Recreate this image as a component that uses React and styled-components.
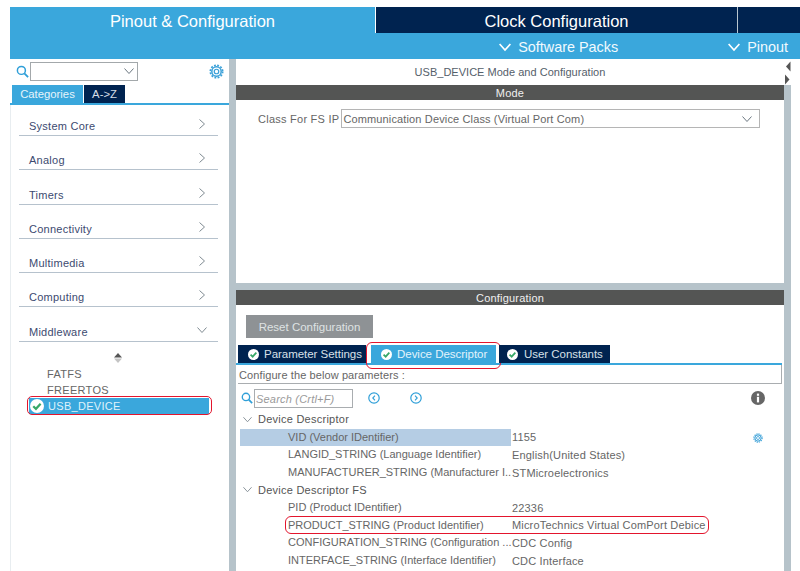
import React from "react";
import styled, { createGlobalStyle } from "styled-components";

const Global = createGlobalStyle`
  html, body { margin: 0; padding: 0; background: #fff; overflow: hidden; }
  body { font-family: "Liberation Sans", Arial, sans-serif; }
  * { box-sizing: border-box; }
`;

const Page = styled.div`
  width: 800px;
  height: 571px;
  overflow: hidden;
  padding: 7px 0 0 10px;
  background: #fff;
  display: flex;
  flex-direction: column;
`;
const TopTabs = styled.div`
  display: flex;
  height: 26px;
  flex: none;
`;
const TopTab = styled.div`
  width: ${(p) => p.$w}px;
  flex: ${(p) => (p.$grow ? 1 : "none")};
  background: ${(p) => (p.$active ? "#3aa7dc" : "#002350")};
  border-left: ${(p) => (p.$sep ? "1px solid #b9c6cf" : "none")};
  color: #fff;
  font-size: 16.5px;
  text-align: center;
  line-height: 29px;
`;
const TabDivider = styled.div`
  width: 1px;
  flex: none;
  background: #fff;
`;
const SubBar = styled.div`
  height: 26px;
  flex: none;
  background: #3aa7dc;
  color: #f2fafe;
  font-size: 14.4px;
  display: flex;
  align-items: center;
  justify-content: flex-end;
  padding: 2px 12px 0 0;
`;
const SubItem = styled.div`
  display: flex;
  align-items: center;
  gap: 7px;
  margin-left: ${(p) => p.$ml || 0}px;
`;
const Body = styled.div`
  flex: 1;
  min-height: 0;
  display: flex;
`;
const Sidebar = styled.div`
  width: 219px;
  flex: none;
  background: #fff;
  display: flex;
  flex-direction: column;
`;
const SearchRow = styled.div`
  height: 26px;
  flex: none;
  display: flex;
  align-items: center;
  padding: 0 5px 2px 6px;
  gap: 1px;
`;
const Combo = styled.div`
  width: 108px;
  height: 19px;
  border: 1px solid #a3a8ab;
  display: flex;
  align-items: center;
  justify-content: flex-end;
  padding-right: 3px;
`;
const GearSlot = styled.div`
  margin-left: auto;
  display: flex;
`;
const SideTabs = styled.div`
  display: flex;
  height: 20px;
  flex: none;
  border-bottom: 2px solid #3aa7dc;
  padding-left: 2px;
`;
const SideTab = styled.div`
  width: ${(p) => p.$w}px;
  height: 18px;
  background: ${(p) => (p.$active ? "#3aa7dc" : "#002350")};
  color: ${(p) => (p.$active ? "#e6f4fb" : "#d5dde6")};
  font-size: 11.3px;
  text-align: center;
  line-height: 18px;
  margin-right: 1px;
`;
const CatList = styled.div`
  flex: 1;
  padding: 0 11px 0 8px;
  border-left: 1px solid #e8edf0;
`;
const Cat = styled.div`
  height: 34.3px;
  border-bottom: 1px solid #b6c2cd;
  display: flex;
  align-items: flex-end;
  justify-content: space-between;
  color: #3c4a70;
  font-size: 11px;
  letter-spacing: 0.25px;
  padding: 0 11px 3px 10px;
  &:first-child { height: 31px; }
`;
const Chevron = styled.span`
  display: flex;
  margin-bottom: 3px;
`;
const SubList = styled.div`
  padding: 11px 9px 0 10px;
  display: flex;
  flex-direction: column;
`;
const SortIcon = styled.div`
  display: flex;
  justify-content: center;
  margin: 0 0 3px 0;
  padding-right: 3px;
`;
const SubEntry = styled.div`
  height: 16px;
  line-height: 16px;
  font-size: 11px;
  letter-spacing: 0.3px;
  color: #666;
  padding-left: 18px;
`;
const Selected = styled.div`
  position: relative;
  height: 16px;
  background: #3aa7dc;
  color: #dff2fb;
  font-size: 11px;
  letter-spacing: 0.3px;
  line-height: 17px;
  padding-left: 19px;
`;
const SelCheck = styled.span`
  position: absolute;
  left: 1px;
  top: 1px;
  display: flex;
`;
const RedBox = styled.div`
  position: absolute;
  left: ${(p) => p.$l}px;
  right: ${(p) => p.$r}px;
  top: ${(p) => p.$t}px;
  bottom: ${(p) => p.$b}px;
  border: 1.5px solid #e3152d;
  border-radius: ${(p) => p.$rad || 5}px;
  pointer-events: none;
`;
const Gutter = styled.div`
  width: 7px;
  flex: none;
  background: #b6c3ca;
`;
const ArrowGutter = styled(Gutter)`
  display: flex;
  flex-direction: column;
`;
const ArrowCap = styled.div`
  height: 26px;
  flex: none;
  background: #fff;
  display: flex;
`;
const Main = styled.div`
  width: 548px;
  flex: none;
  display: flex;
  flex-direction: column;
  background: #b6c3ca;
`;
const ModePanel = styled.div`
  height: 224px;
  flex: none;
  background: #fff;
  margin-bottom: 7px;
`;
const PanelTitle = styled.div`
  height: 26px;
  text-align: center;
  font-size: 11px;
  letter-spacing: 0.02px;
  line-height: 27px;
  color: #55606a;
`;
const SectionHead = styled.div`
  height: 15px;
  background: #545554;
  color: #f0f0f0;
  font-size: 11px;
  text-align: center;
  line-height: 16px;
  letter-spacing: 0.2px;
`;
const ClassRow = styled.div`
  display: flex;
  align-items: center;
  margin-top: 9px;
  padding-left: 22px;
  color: #666;
  font-size: 11px;
  letter-spacing: 0.25px;
`;
const ClassSelect = styled.div`
  width: 419px;
  height: 19px;
  margin-left: 2px;
  border: 1px solid #b5b5b5;
  display: flex;
  align-items: center;
  justify-content: space-between;
  padding: 1px 7px 0 1px;
  color: #666;
  letter-spacing: 0.14px;
`;
const ConfigPanel = styled.div`
  flex: 1;
  background: #fff;
  min-height: 0;
  overflow: hidden;
`;
const ResetButton = styled.div`
  width: 127px;
  height: 23px;
  margin: 10px 0 7px 10px;
  background: #8e9295;
  color: #dfe2e3;
  font-size: 11.5px;
  text-align: center;
  line-height: 24px;
`;
const ConfTabs = styled.div`
  display: flex;
  height: 20px;
  padding-left: 2px;
  border-bottom: 2px solid #3aa7dc;
  margin-right: 2px;
`;
const ConfTab = styled.div`
  position: relative;
  width: ${(p) => p.$w}px;
  height: 18px;
  flex: none;
  white-space: nowrap;
  background: ${(p) => (p.$active ? "#3aa7dc" : "#002350")};
  color: ${(p) => (p.$active ? "#e3f3fb" : "#d8e0e8")};
  font-size: 11.5px;
  letter-spacing: -0.03px;
  display: flex;
  align-items: center;
  gap: ${(p) => p.$gap || 5}px;
  padding-left: ${(p) => p.$pl}px;
  margin-right: ${(p) => p.$mr || 0}px;
`;
const ConfigureLine = styled.div`
  height: 19px;
  margin: 0 2px 0 2px;
  border-bottom: 1px solid #a9adb0;
  border-right: 1px solid #a9adb0;
  color: #666;
  font-size: 11px;
  letter-spacing: 0.1px;
  line-height: 20px;
  padding-left: 1px;
`;
const ToolRow = styled.div`
  display: flex;
  align-items: center;
  height: 22px;
  margin-top: 3px;
  padding: 0 19px 0 5px;
`;
const TreeSearch = styled.div`
  width: 99px;
  height: 19px;
  margin-left: 1px;
  border: 1px solid #a9adb0;
  color: #9a9a9a;
  font-size: 11px;
  font-style: italic;
  line-height: 18px;
  padding-left: 1px;
  letter-spacing: 0.2px;
`;
const RoundBtn = styled.span`
  display: flex;
  margin-left: ${(p) => p.$ml}px;
`;
const InfoSlot = styled.span`
  display: flex;
  margin-left: auto;
`;
const Tree = styled.div`
  padding: 2px 0 0 4px;
`;
const Group = styled.div`
  height: 17.6px;
  display: flex;
  align-items: center;
  gap: 6px;
  padding: 0 0 1px 3px;
  color: #555;
  font-size: 11px;
  letter-spacing: 0.25px;
`;
const Row = styled.div`
  position: relative;
  height: 17.6px;
  display: flex;
  align-items: center;
  font-size: 11px;
  color: #666;
`;
const Key = styled.div`
  width: 271px;
  height: 100%;
  flex: none;
  padding-left: 48px;
  white-space: nowrap;
  overflow: hidden;
  letter-spacing: 0;
  line-height: 17.6px;
  background: ${(p) => (p.$hl ? "#b5cde4" : "transparent")};
`;
const Val = styled.div`
  padding-left: 1px;
  white-space: nowrap;
  letter-spacing: 0.17px;
`;
const RowGear = styled.span`
  position: absolute;
  right: 21px;
  top: 4px;
  display: flex;
`;

const Search = ({ s = 14 }) => (
  <svg width={s} height={s} viewBox="0 0 14 14" fill="none" stroke="#2f9fd8" strokeWidth="1.6">
    <circle cx="5.8" cy="5.8" r="4.3" />
    <path d="M9 9l4 4" strokeWidth="2" />
  </svg>
);
const Chev = ({ dir = "right", c = "#7f8a92", s = 10, w = 1 }) => (
  <svg width={s} height={s} viewBox="0 0 10 10" fill="none" stroke={c} strokeWidth={w}>
    <path d={dir === "right" ? "M2.5 .5L7.5 5 2.5 9.5" : "M.5 2.5L5 7.5 9.5 2.5"} />
  </svg>
);
const Gear = ({ s = 15 }) => (
  <svg width={s} height={s} viewBox="0 0 16 16" fill="none" stroke="#3aa0d8">
    <circle cx="8" cy="8" r="2.4" strokeWidth="1.3" />
    <circle cx="8" cy="8" r="5" strokeWidth="1.6" />
    <circle cx="8" cy="8" r="6.6" strokeWidth="1.8" strokeDasharray="2 1.45" />
  </svg>
);
const Check = ({ s = 11, bg = "#fff", c = "#38a868" }) => (
  <svg width={s} height={s} viewBox="0 0 12 12">
    <circle cx="6" cy="6" r="6" fill={bg} />
    <path d="M2.8 6.2l2.3 2.2 4-4.4" fill="none" stroke={c} strokeWidth="1.9" />
  </svg>
);
const Round = ({ dir }) => (
  <svg width="12" height="12" viewBox="0 0 12 12" fill="none" stroke="#2f9fd8">
    <circle cx="6" cy="6" r="5.2" strokeWidth="1.2" />
    <path d={dir === "l" ? "M7 3.7L4.8 6 7 8.3" : "M5 3.7L7.2 6 5 8.3"} strokeWidth="1.1" />
  </svg>
);

const cats = ["System Core", "Analog", "Timers", "Connectivity", "Multimedia", "Computing"];

export default function App() {
  return (
    <Page>
      <Global />
      <TopTabs>
        <TopTab $active $w={365}>Pinout &amp; Configuration</TopTab>
        <TabDivider />
        <TopTab $w={361}>Clock Configuration</TopTab>
        <TopTab $sep $grow />
      </TopTabs>
      <SubBar>
        <SubItem>
          <Chev dir="down" c="#fff" s={12} w={1.4} />
          Software Packs
        </SubItem>
        <SubItem $ml={110}>
          <Chev dir="down" c="#fff" s={12} w={1.4} />
          Pinout
        </SubItem>
      </SubBar>
      <Body>
        <Sidebar>
          <SearchRow>
            <Search s={13} />
            <Combo>
              <Chev dir="down" c="#6b7780" />
            </Combo>
            <GearSlot>
              <Gear />
            </GearSlot>
          </SearchRow>
          <SideTabs>
            <SideTab $active $w={71}>Categories</SideTab>
            <SideTab $w={41}>A-&gt;Z</SideTab>
          </SideTabs>
          <CatList>
            {cats.map((c) => (
              <Cat key={c}>
                {c}
                <Chevron><Chev /></Chevron>
              </Cat>
            ))}
            <Cat>
              Middleware
              <Chevron><Chev dir="down" /></Chevron>
            </Cat>
            <SubList>
              <SortIcon>
                <svg width="8" height="10" viewBox="0 0 8 10">
                  <path d="M4 0L8 4.4H0z" fill="#555" />
                  <path d="M4 10L0 5.6H8z" fill="#c4c4c4" />
                </svg>
              </SortIcon>
              <SubEntry>FATFS</SubEntry>
              <SubEntry>FREERTOS</SubEntry>
              <Selected>
                <SelCheck><Check s={14} /></SelCheck>
                USB_DEVICE
                <RedBox $l={-2} $r={-3} $t={-2} $b={-1} />
              </Selected>
            </SubList>
          </CatList>
        </Sidebar>
        <Gutter />
        <Main>
          <ModePanel>
            <PanelTitle>USB_DEVICE Mode and Configuration</PanelTitle>
            <SectionHead>Mode</SectionHead>
            <ClassRow>
              Class For FS IP
              <ClassSelect>
                Communication Device Class (Virtual Port Com)
                <Chev dir="down" c="#6b7780" />
              </ClassSelect>
            </ClassRow>
          </ModePanel>
          <ConfigPanel>
            <SectionHead>Configuration</SectionHead>
            <ResetButton>Reset Configuration</ResetButton>
            <ConfTabs>
              <ConfTab $w={128} $pl={10} $mr={5}><Check />Parameter Settings</ConfTab>
              <ConfTab $active $w={125} $pl={10} $mr={3}>
                <Check />Device Descriptor
                <RedBox $l={-5} $r={-5} $t={-3} $b={-6} $rad={6} />
              </ConfTab>
              <ConfTab $w={111} $pl={8} $gap={6}><Check />User Constants</ConfTab>
            </ConfTabs>
            <ConfigureLine>Configure the below parameters :</ConfigureLine>
            <ToolRow>
              <Search s={12} />
              <TreeSearch>Search (Crtl+F)</TreeSearch>
              <RoundBtn $ml={15}><Round dir="l" /></RoundBtn>
              <RoundBtn $ml={30}><Round dir="r" /></RoundBtn>
              <InfoSlot>
                <svg width="14" height="14" viewBox="0 0 14 14">
                  <circle cx="7" cy="7" r="7" fill="#666" />
                  <rect x="5.9" y="2.6" width="2.2" height="2.2" fill="#fff" />
                  <rect x="5.9" y="5.8" width="2.2" height="5.6" fill="#fff" />
                </svg>
              </InfoSlot>
            </ToolRow>
            <Tree>
              <Group><Chev dir="down" s={9} />Device Descriptor</Group>
              <Row>
                <Key $hl>VID (Vendor IDentifier)</Key>
                <Val>1155</Val>
                <RowGear><Gear s={10} /></RowGear>
              </Row>
              <Row>
                <Key>LANGID_STRING (Language Identifier)</Key>
                <Val>English(United States)</Val>
              </Row>
              <Row>
                <Key>MANUFACTURER_STRING (Manufacturer I..</Key>
                <Val>STMicroelectronics</Val>
              </Row>
              <Group><Chev dir="down" s={9} />Device Descriptor FS</Group>
              <Row>
                <Key>PID (Product IDentifier)</Key>
                <Val>22336</Val>
              </Row>
              <Row>
                <Key>PRODUCT_STRING (Product Identifier)</Key>
                <Val>MicroTechnics Virtual ComPort Debice</Val>
                <RedBox $l={45} $r={75} $t={-1} $b={0} $rad={6} />
              </Row>
              <Row>
                <Key>CONFIGURATION_STRING (Configuration ...</Key>
                <Val>CDC Config</Val>
              </Row>
              <Row>
                <Key>INTERFACE_STRING (Interface Identifier)</Key>
                <Val>CDC Interface</Val>
              </Row>
            </Tree>
          </ConfigPanel>
        </Main>
        <ArrowGutter>
          <ArrowCap>
            <svg width="7" height="26" viewBox="0 0 7 26">
              <path d="M6.5 2.5L2 7.5l4.5 5z" fill="#555" />
              <path d="M1 15.5l4.5 5-4.5 5z" fill="#555" />
            </svg>
          </ArrowCap>
        </ArrowGutter>
      </Body>
    </Page>
  );
}
